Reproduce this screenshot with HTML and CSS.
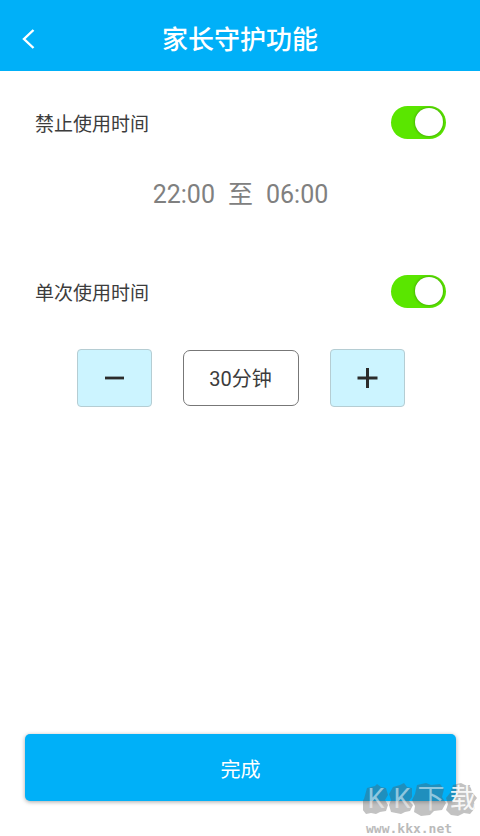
FILE: index.html
```html
<!DOCTYPE html>
<html lang="zh-CN">
<head>
<meta charset="utf-8">
<meta name="viewport" content="width=device-width, initial-scale=1">
<title>家长守护功能</title>
<link rel="stylesheet" href="styles.css">
</head>
<body>
<header class="bar">
  <button class="back" type="button" aria-label="返回">
    <svg width="14" height="22" viewBox="0 0 14 22" fill="none" stroke="#fff" stroke-width="2.400"><path d="M12.500 2 3 11l9.500 9"/></svg>
  </button>
  <h1 class="title">家长守护功能</h1>
</header>
<main class="content">
  <div class="row">
    <label for="forbid">禁止使用时间</label>
    <input class="switch" id="forbid" type="checkbox" role="switch" checked>
  </div>
  <p class="period"><span>22:00</span><span>至</span><span>06:00</span></p>
  <div class="row">
    <label for="single">单次使用时间</label>
    <input class="switch" id="single" type="checkbox" role="switch" checked>
  </div>
  <div class="stepper">
    <button class="step" type="button" aria-label="减少">
      <svg width="22" height="22" viewBox="0 0 22 22" stroke="#2b2b2b" stroke-width="2.800"><path d="M2 11h19"/></svg>
    </button>
    <output class="amount">30分钟</output>
    <button class="step" type="button" aria-label="增加">
      <svg width="22" height="22" viewBox="0 0 22 22" stroke="#2b2b2b" stroke-width="3"><path d="M1.500 11h20M11.500 1v20"/></svg>
    </button>
  </div>
</main>
<footer class="footer">
  <button class="done" type="button">完成</button>
</footer>
<div class="watermark">
  <svg class="blobs" width="116" height="36" viewBox="0 0 116 36" fill="#555" fill-opacity=".36">
    <path d="M4 6 12 4 14 2l4 3 5 1 2 7-3 5 3 5-2 6-6 1-4 2-5-1-5 1-4-5-1-6 3-4Z"/>
    <path d="m30 5 7-2 4-2 3 4 5 1v9l-3 4 4 4-3 6-5 1-4 2-5-1-5-1-2-7 2-5-2-6Z"/>
    <path d="m54 3 9-2 5 2 9-1 4 5-2 8 4 6-4 7-8 1-4 4-9 1-7-4 1-6-3-6 3-6Z"/>
    <path d="m90 3 8-2 4 2h5l2 7 5 6-3 4 1 6-5 6-6-1-6 3-7-1-5-5 2-6-2-6 4-5Z"/>
  </svg>
  <div class="mark"><span>K</span><span>K</span><span>下</span><span>载</span></div>
  <div class="site">www.kkx.net</div>
</div>
</body>
</html>
```
FILE: styles.css
```css
* { box-sizing: border-box; }

body {
  margin: 0;
  min-height: 100vh;
  display: flex;
  flex-direction: column;
  background: #fff;
  color: #3c3c3c;
  font-family: Roboto, "Noto Sans CJK SC", sans-serif;
  font-size: 20px;
}

button {
  border: 0;
  padding: 0;
  font: inherit;
  cursor: pointer;
}

.bar {
  display: grid;
  grid-template-columns: 60px 1fr 60px;
  align-items: center;
  height: 71px;
  padding-top: 6px;
  background: #00b0f8;
  color: #fff;
}

.back {
  display: flex;
  align-items: center;
  height: 48px;
  padding-left: 21px;
  background: none;
}

.title {
  margin: 0;
  padding-top: 2px;
  text-align: center;
  font-size: 26px;
  line-height: 36px;
  font-weight: 500;
}

.content {
  flex: 1;
  padding: 31px 34px 31px 35px;
}

.row {
  display: flex;
  align-items: center;
  justify-content: space-between;
  height: 40px;
  font-size: 19px;
}

.switch {
  appearance: none;
  display: flex;
  align-items: center;
  justify-content: flex-end;
  width: 55px;
  height: 33px;
  margin: 0;
  padding-right: 3px;
  border-radius: 17px;
  background: #ccc;
}

.switch:checked { background: #5ae600; }
.switch:not(:checked) { justify-content: flex-start; padding-left: 3px; }

.switch::before {
  content: "";
  width: 28px;
  height: 28px;
  border-radius: 50%;
  background: #fff;
  box-shadow: 0 0 3px rgba(0, 0, 0, .4);
}

.period {
  display: flex;
  justify-content: center;
  gap: 13px;
  margin: 34px 0 58px;
  font-size: 25px;
  line-height: 37px;
  color: #808080;
}

.stepper {
  display: flex;
  align-items: center;
  justify-content: center;
  gap: 31px;
  margin-top: 38px;
}

.step {
  display: flex;
  align-items: center;
  justify-content: center;
  width: 75px;
  height: 58px;
  border: 1px solid #b5cdd3;
  border-radius: 4px;
  background: #ccf4ff;
}

.amount {
  width: 116px;
  height: 56px;
  border: 1px solid #777;
  border-radius: 7px;
  text-align: center;
  line-height: 57px;
}

.footer { padding: 0 24px 35px 25px; }

.done {
  display: block;
  width: 100%;
  height: 67px;
  padding-top: 2px;
  border-radius: 5px;
  background: #00b0f8;
  color: #fff;
  box-shadow: 0 1px 4px rgba(0, 0, 0, .35);
}

.watermark {
  position: absolute;
  right: 0;
  bottom: 0;
  width: 117px;
  height: 54px;
  pointer-events: none;
}

.blobs { display: block; }

.mark {
  position: absolute;
  inset: 0 0 auto;
  display: grid;
  grid-template-columns: 26px 26px 32px 32px;
  text-align: center;
  color: rgba(255, 255, 255, .5);
  font-size: 27px;
  line-height: 34px;
}

.mark span:last-child { color: rgba(255, 255, 255, .9); }

.site {
  color: #bbb;
  font-family: "DejaVu Sans Mono", monospace;
  font-size: 13px;
  font-weight: 700;
  line-height: 22px;
  padding-left: 3px;
}
```
